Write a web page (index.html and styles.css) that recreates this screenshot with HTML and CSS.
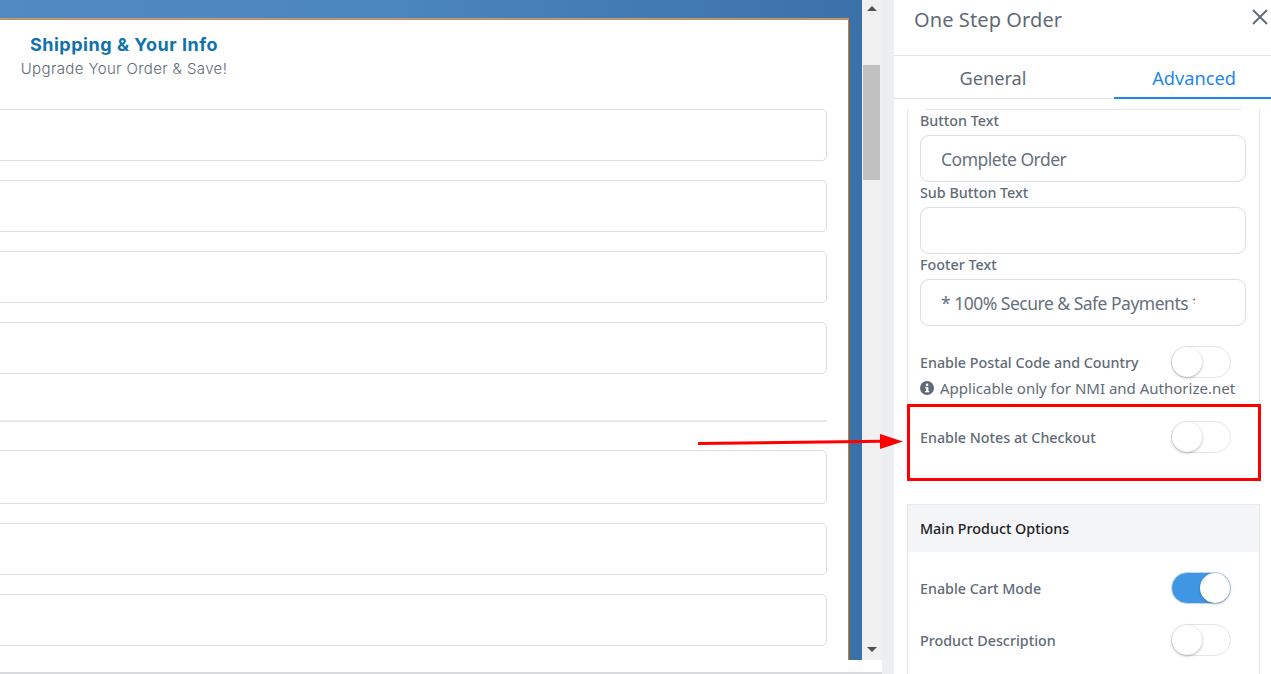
FILE: index.html
```html
<!DOCTYPE html>
<html lang="en">
<head>
<meta charset="utf-8">
<title>One Step Order</title>
<link rel="stylesheet" href="styles.css">
</head>
<body>
<div class="app">
  <section class="stage">
    <div class="canvas">
      <div class="viewport">
        <div class="blue">
          <div class="card">
            <div class="card-head">
              <h2>Shipping &amp; Your Info</h2>
              <p>Upgrade Your Order &amp; Save!</p>
            </div>
            <div class="group group-a">
              <div class="field"></div>
              <div class="field"></div>
              <div class="field"></div>
              <div class="field"></div>
            </div>
            <div class="rule"></div>
            <div class="group group-b">
              <div class="field tall"></div>
              <div class="field"></div>
              <div class="field"></div>
            </div>
          </div>
        </div>
        <div class="scrollbar">
          <span class="arrow up"></span>
          <div class="track"><div class="thumb"></div></div>
          <span class="arrow down"></span>
        </div>
      </div>
    </div>
    <div class="strip"></div>
  </section>

  <aside class="panel">
    <header class="panel-head">
      <h1>One Step Order</h1>
      <svg class="close" width="16" height="16" viewBox="0 0 16 16" aria-label="Close"><path d="M1 1l14 14M15 1L1 15" stroke="#5f6b76" stroke-width="1.9" fill="none"/></svg>
    </header>
    <nav class="tabs">
      <div class="tab">General</div>
      <div class="tab active">Advanced</div>
    </nav>
    <div class="panel-body">
      <div class="box">
        <div class="box-rule"></div>
        <label class="lbl">Button Text</label>
        <input class="inp" type="text" value="Complete Order">
        <label class="lbl">Sub Button Text</label>
        <input class="inp" type="text" value="">
        <label class="lbl">Footer Text</label>
        <input class="inp" type="text" value="* 100% Secure &amp; Safe Payments *">
        <div class="row row-postal">
          <span class="row-label">Enable Postal Code and Country</span>
          <span class="toggle"></span>
        </div>
        <div class="hint">
          <svg width="14" height="14" viewBox="0 0 14 14"><circle cx="7" cy="7" r="7" fill="#5f6b76"/><rect x="6" y="6" width="2.4" height="5" fill="#fff"/><rect x="5.2" y="10" width="4" height="1.3" fill="#fff"/><rect x="5.2" y="6" width="2" height="1.2" fill="#fff"/><circle cx="7.1" cy="3.9" r="1.3" fill="#fff"/></svg>
          <span>Applicable only for NMI and Authorize.net</span>
        </div>
        <div class="row row-notes">
          <span class="row-label">Enable Notes at Checkout</span>
          <span class="toggle"></span>
        </div>
      </div>
      <div class="box box-main">
        <div class="box-title">Main Product Options</div>
        <div class="row row-cart">
          <span class="row-label">Enable Cart Mode</span>
          <span class="toggle on"></span>
        </div>
        <div class="row row-desc">
          <span class="row-label">Product Description</span>
          <span class="toggle"></span>
        </div>
      </div>
    </div>
  </aside>

  <div class="highlight"></div>
  <svg class="pointer" width="210" height="20" viewBox="0 0 210 20">
    <path d="M0 9.5L184 7.2" stroke="#f00" stroke-width="3" fill="none"/>
    <path d="M182 0l23 7.5-23 7.5z" fill="#f00"/>
  </svg>
</div>
</body>
</html>
```

FILE: styles.css
```css
* { box-sizing: border-box; }
html, body { margin: 0; padding: 0; height: 674px; overflow: hidden; background: #fff; }
body { font-family: "Noto Sans", "Open Sans", sans-serif; color: #5f6b76; }
.app { position: relative; display: flex; width: 1271px; height: 674px; overflow: hidden; }

/* Left preview */
.stage { display: flex; width: 894px; height: 674px; flex: none; }
.canvas { width: 882px; height: 674px; border-bottom: 2px solid #d9dadb; flex: none; }
.strip { flex: 1; background: #eceef0; }
.viewport { display: flex; height: 660px; }
.blue { width: 862px; flex: none; padding-top: 19px; background: linear-gradient(90deg, #528ac2 0%, #4c86bf 45%, #3a71a8 100%); }
.card { width: 849px; height: 641px; background: #fff; border-top: 1px solid #ef7f1a; border-right: 1px solid #ef7300; box-shadow: 0 -1px 0 #8fa6bd; overflow: hidden; }
.card-head { width: 208px; margin: 15px 0 0 20px; text-align: center; }
.card-head h2 { margin: 0; font: 700 18px/20px Inter, sans-serif; color: #0f72ab; letter-spacing: .52px; white-space: nowrap; }
.card-head p { margin: 4px 0 0; font: 300 15px/20px Inter, sans-serif; color: #5f6a75; letter-spacing: .38px; white-space: nowrap; }
.group { display: flex; flex-direction: column; gap: 19px; width: 827px; }
.group-a { margin-top: 30px; }
.group-b { margin-top: 28px; }
.field { height: 52px; margin-left: -20px; background: #fff; border: 1px solid #dcdde3; border-radius: 5px; }
.field.tall { height: 54px; }
.rule { width: 827px; height: 2px; margin-top: 46px; background: #e8e8ec; }

/* Scrollbar */
.scrollbar { width: 20px; flex: none; background: #f0f0f0; display: flex; flex-direction: column; align-items: center; }
.track { flex: 1; width: 100%; padding: 48px 2px 0 1px; }
.thumb { width: 17px; height: 115px; background: #c1c1c1; }
.arrow { width: 0; height: 0; border-left: 5px solid transparent; border-right: 5px solid transparent; flex: none; }
.arrow.up { margin-top: 6px; border-bottom: 5px solid #505050; margin-bottom: 6px; }
.arrow.down { margin-bottom: 8px; border-top: 5px solid #505050; }

/* Panel */
.panel { flex: 1; height: 674px; background: #fff; overflow: hidden; }
.panel-head { position: relative; height: 56px; padding: 6px 20px 0; border-bottom: 1px solid #dfe3e6; }
.panel-head h1 { margin: 0; font-size: 20px; line-height: 28px; font-weight: 400; letter-spacing: .1px; color: #5f6b76; }
.close { position: absolute; top: 9px; right: 3px; }
.tabs { display: flex; height: 43px; border-bottom: 1px solid #dae0e5; }
.tab { width: 220px; padding: 8px 22px 0 0; text-align: center; font-size: 18.2px; line-height: 28px; color: #5f6b76; }
.tab.active { width: 157px; color: #1e88f0; height: 43px; border-bottom: 2px solid #1e88f0; padding: 8px 0 0 3px; }
.panel-body { padding: 10px 11px 0 13px; }
.box { border-left: 1px solid #e2e4e7; border-right: 1px solid #e2e4e7; padding: 0 13px 0 12px; }
.box-rule { height: 1px; margin: 0 5px; background: #e4e6e9; }
.lbl { display: block; height: 25px; padding-top: 1px; font-size: 14.3px; line-height: 19px; font-weight: 500; color: #5f6b76; }
.inp { display: block; width: 326px; height: 47px; padding: 0 50px 0 20px; border: 1px solid #dcdde3; border-radius: 9px; font: 400 17.5px "Noto Sans", sans-serif; letter-spacing: -.5px; color: #66717c; background: #fff; outline: none; }
.row { display: flex; align-items: center; justify-content: space-between; height: 32px; padding-right: 15px; }
.row-label { font-size: 14.3px; font-weight: 500; color: #5f6b76; }
.row-postal { margin-top: 20px; }
.hint { display: flex; align-items: center; gap: 6px; height: 20px; font-size: 15px; color: #5f6b76; white-space: nowrap; }
.row-notes { margin-top: 23px; margin-bottom: 51px; }
.box-main { border-top: 1px solid #e9ebed; padding: 0 13px 0 12px; height: 200px; }
.box-title { height: 47px; margin: 0 -13px 0 -12px; padding-left: 12px; background: #f4f5f6; font-size: 14.3px; line-height: 47px; font-weight: 500; color: #1d2125; }
.row-cart { margin-top: 20px; }
.row-desc { margin-top: 20px; }
.toggle { position: relative; display: block; width: 60px; height: 32px; border: 1px solid #e3e6ea; border-radius: 16px; background: #fff; flex: none; }
.toggle::after { content: ""; position: absolute; left: 0; top: 0; width: 30px; height: 30px; border-radius: 50%; background: #fff; box-shadow: 0 1px 3px rgba(60,70,85,.4); }
.toggle.on { background: #3f97e4; border-color: #c8d6e4; }
.toggle.on::after { left: 28px; }

/* Annotations over the screenshot */
.highlight { position: absolute; left: 907px; top: 404px; width: 354px; height: 77px; border: 3px solid #f00; pointer-events: none; }
.pointer { position: absolute; left: 698px; top: 434px; }
```
